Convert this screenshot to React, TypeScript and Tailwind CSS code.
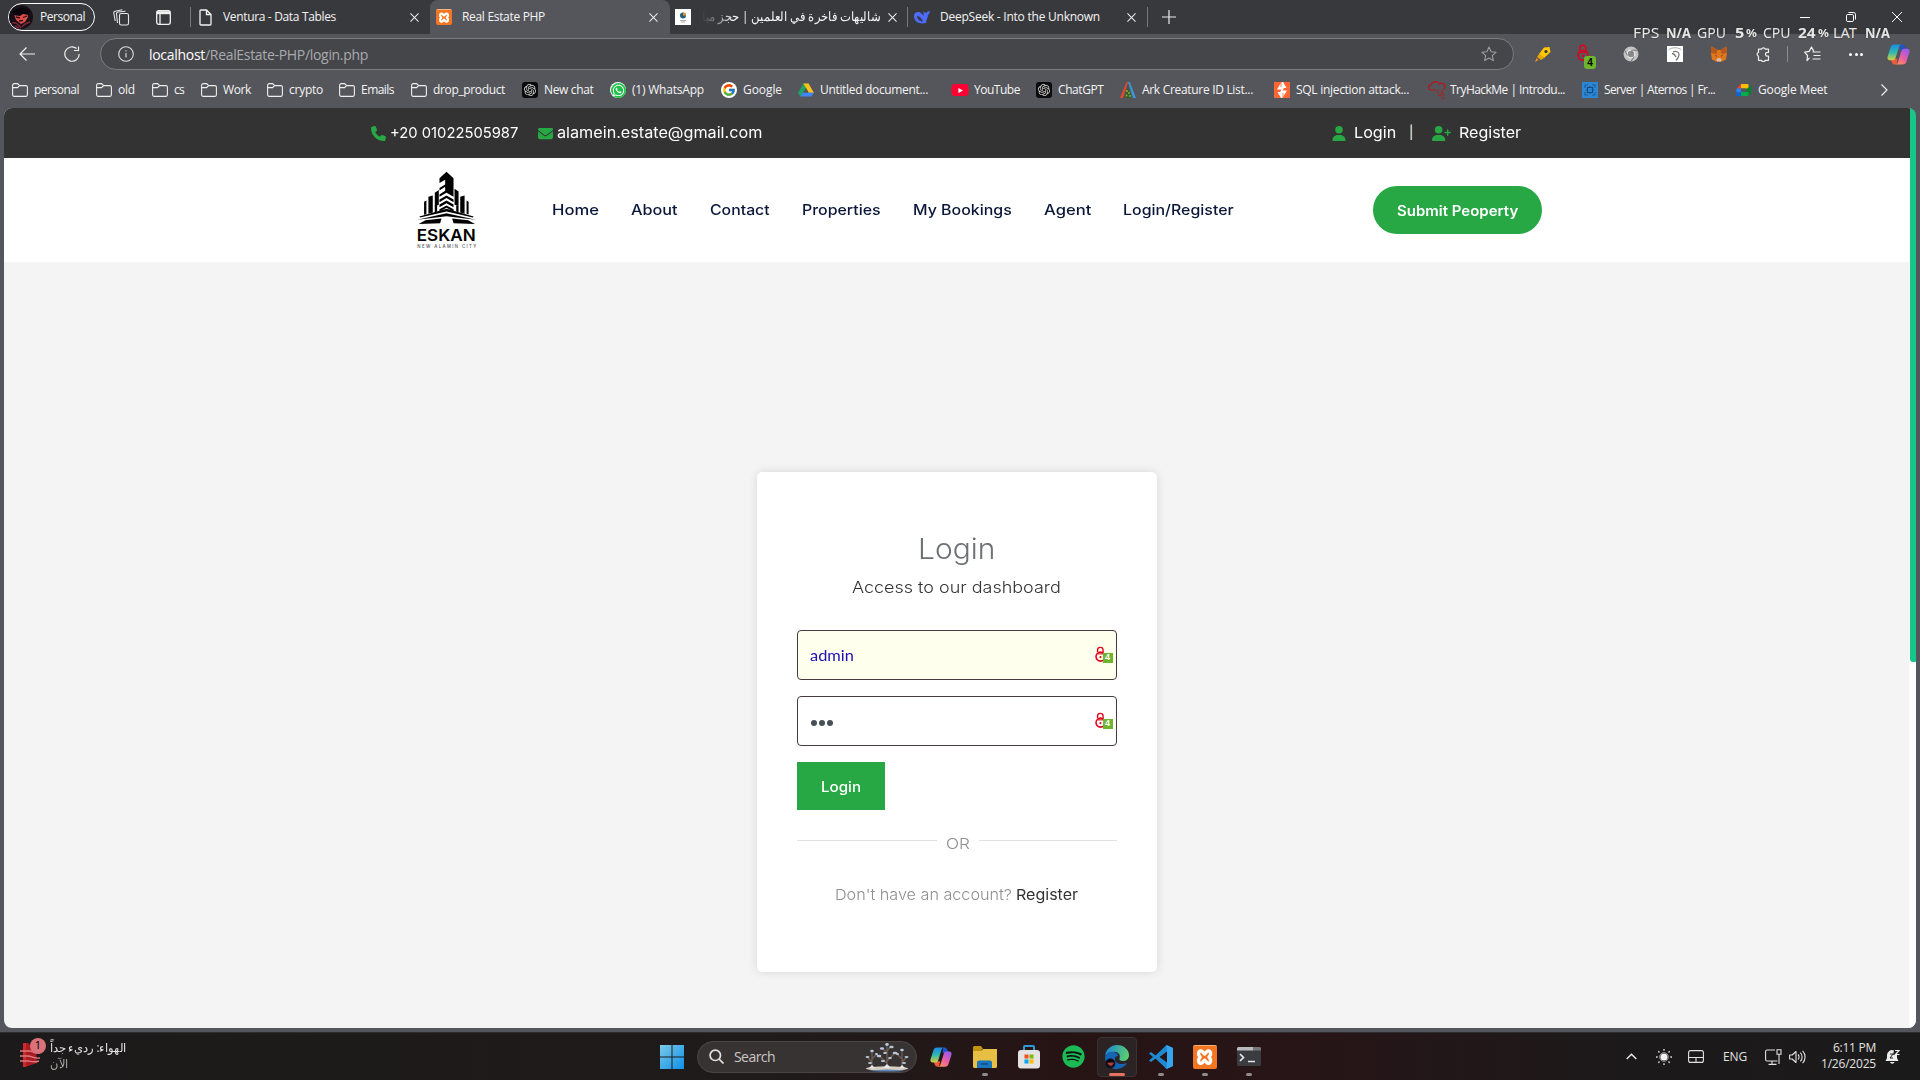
import { useLayoutEffect, useRef, type ReactNode } from "react";
import { FcGoogle } from "react-icons/fc";
import { FaYoutube, FaSpotify, FaWhatsapp } from "react-icons/fa";
import { FaPhone, FaEnvelope, FaUser, FaUserPlus } from "react-icons/fa6";
import { SiOpenai } from "react-icons/si";

/** Text spread over a fixed measure: the letter spacing is worked out once the text is laid out. */
function T({ w, className = "", children }: { w: number; className?: string; children: string }) {
  const ref = useRef<HTMLSpanElement>(null);
  useLayoutEffect(() => {
    const el = ref.current;
    if (!el) return;
    el.style.letterSpacing = "0px";
    const natural = el.getBoundingClientRect().width;
    el.style.letterSpacing = `${(w - natural) / children.length}px`;
  }, [w, children]);
  return (
    <span ref={ref} className={`inline-block shrink-0 whitespace-pre ${className}`}>
      {children}
    </span>
  );
}

/** Text whose glyphs are widened or narrowed to fill a fixed measure. */
function Wide({ w, className = "", children }: { w: number; className?: string; children: string }) {
  const ref = useRef<HTMLSpanElement>(null);
  useLayoutEffect(() => {
    const el = ref.current;
    if (!el) return;
    el.style.transform = `scaleX(${w / el.offsetWidth})`;
  }, [w, children]);
  return (
    <span className={`flex shrink-0 justify-start ${className}`} style={{ width: w }} dir="ltr">
      <span ref={ref} className="inline-block shrink-0 origin-left whitespace-pre">
        {children}
      </span>
    </span>
  );
}

function Slot({ className, children }: { className: string; children?: ReactNode }) {
  return <div className={`flex shrink-0 items-center justify-center ${className}`}>{children}</div>;
}

/* ---------- icons ---------- */

const Close = () => (
  <svg viewBox="0 0 10 10" className="size-[9px] shrink-0" stroke="#e8e8e8" strokeWidth="1.2">
    <path d="M.5.5l9 9M9.5.5l-9 9" />
  </svg>
);

const Folder = () => (
  <svg viewBox="0 0 16 16" className="size-4 shrink-0" fill="none" stroke="#eee" strokeWidth="1.1">
    <path d="M.6 3.2a1.6 1.6 0 0 1 1.6-1.6h3.4l2 2h6.2a1.6 1.6 0 0 1 1.6 1.6v7.6a1.6 1.6 0 0 1-1.6 1.6H2.2a1.6 1.6 0 0 1-1.6-1.6zM.6 5.6h5l2-2" />
  </svg>
);

const Gpt = () => (
  <span className="flex size-4 shrink-0 items-center justify-center rounded-[3px] bg-[#0b0b0b]">
    <SiOpenai className="size-3 text-[#d8d8d8]" />
  </span>
);

const WhatsApp = () => (
  <span className="flex size-4 shrink-0 items-center justify-center rounded-full bg-white">
    <span className="flex size-[15px] items-center justify-center rounded-full bg-[#1fc24b]">
      <FaWhatsapp className="size-[13px] text-white" />
    </span>
  </span>
);

const GoogleG = () => (
  <span className="flex size-4 shrink-0 items-center justify-center rounded-full bg-white">
    <FcGoogle className="size-[14px]" />
  </span>
);

const Drive = () => (
  <svg viewBox="0 0 16 16" className="size-4 shrink-0">
    <path d="M5.4 1.5h5.2L5 11.2l-2.6 3.3L0 10.9z" fill="#1fa463" />
    <path d="M5.4 1.5h5.2l5.4 9.4h-5.3z" fill="#fbc116" />
    <path d="M5 10.6h11l-2.6 4H2.4z" fill="#4385f5" />
    <path d="M8 6.1l2.7 4.5H5.4z" fill="#55565b" />
  </svg>
);

const YouTube = () => (
  <span className="relative flex size-4 shrink-0 items-center justify-center">
    <FaYoutube className="size-[18px] shrink-0 text-[#ff0033]" />
    <span className="absolute -z-0 flex h-[11px] w-4 items-center justify-center rounded-[3px] bg-[#ff0033]">
      <svg viewBox="0 0 6 6" className="size-[5px]" fill="#fff"><path d="M.5 0L6 3 .5 6z" /></svg>
    </span>
  </span>
);

const Ark = () => (
  <svg viewBox="0 0 16 16" className="size-4 shrink-0">
    <path d="M6.500 0L8 0 3 16H0z" fill="#e8472d" />
    <path d="M8 0h1.800L16 16h-3z" fill="#3a96d8" />
    <path d="M8 4l4 12H4z" fill="#3d5b2c" />
    <circle cx="7" cy="9" r=".9" fill="#7bbf3a" /><circle cx="9" cy="11" r=".9" fill="#7bbf3a" />
    <circle cx="6.500" cy="13.500" r=".9" fill="#7bbf3a" /><circle cx="10" cy="14" r=".9" fill="#7bbf3a" />
  </svg>
);

const Bolt = () => (
  <svg viewBox="0 0 16 16" className="size-4 shrink-0">
    <path d="M0 0h16v16H0z" fill="#ff6633" />
    <path d="M7.500 0L3 7.500h4.500L6 10H3.500L7 16h1.500L13 8.500H8.500L10 6h2.500L9 0z" fill="#fff" />
    <path d="M7 0v5M9 11v5" stroke="#ff6633" strokeWidth=".8" />
  </svg>
);

const TryHackMe = () => (
  <svg viewBox="0 0 18 18" className="size-[18px] shrink-0" fill="none" stroke="#b3171f" strokeWidth="1.200">
    <path d="M8 9H3.500a2.700 2.700 0 0 1-.2-5.400A4.500 4.500 0 0 1 11.500 3a3.300 3.300 0 0 1 4.200 5.200" />
    <path d="M9 9.500h2M12.500 9.500h3M8.500 12h1.500M11.500 12h4M10 14.500h4M13 17h3.500M15.500 12v3" stroke="#8f3036" strokeWidth="1.600" />
  </svg>
);

const Aternos = () => (
  <svg viewBox="0 0 16 16" className="size-4 shrink-0">
    <path d="M0 0h16v16H0z" fill="#2b87d3" />
    <path d="M3 6V3h3M10 3h3v3M13 10v3h-3M6 13H3v-3" fill="none" stroke="#1d5f9b" strokeWidth="1.200" />
    <path d="M5.500 5.500h5v5h-5zM4 8h1.500M10.500 8H12M8 4v1.500M8 10.500V12" fill="none" stroke="#174a7c" strokeWidth="1.100" />
  </svg>
);

const Meet = () => (
  <svg viewBox="0 0 16 16" className="size-4 shrink-0">
    <path d="M5 2h6.500a1 1 0 0 1 1 1v3.500H5z" fill="#fbbc04" />
    <path d="M.5 6.500L5 2v4.500z" fill="#ea4335" />
    <path d="M.5 6.500H5v4H.5z" fill="#2684fc" />
    <path d="M.5 10.500H5V14H1.500a1 1 0 0 1-1-1z" fill="#0066da" />
    <path d="M5 10h7.500v3a1 1 0 0 1-1 1H5z" fill="#00ac47" />
    <path d="M9.500 8l5.800-4.800v9.600z" fill="#00832d" />
    <path d="M5 6.500h4.500v3.500H5z" fill="#55565b" />
  </svg>
);

const Xampp = ({ className = "size-4" }: { className?: string }) => (
  <span className={`flex shrink-0 items-center justify-center rounded-[2px] border-t border-[#f9b27a] bg-[#f37623] ${className}`}>
    <svg viewBox="0 0 16 16" className="size-[88%]" fill="none" stroke="#fff" strokeWidth="2.700" strokeLinecap="round" strokeLinejoin="round">
      <path d="M3.300 6.200V4.600a1.700 1.700 0 0 1 3.200-.6L8 5.500 9.500 4a1.700 1.700 0 0 1 3.200.6v1.600L11.500 8l1.200 1.800v1.600a1.700 1.700 0 0 1-3.200.6L8 10.500 6.500 12a1.700 1.700 0 0 1-3.200-.6V9.800L4.500 8z" />
    </svg>
  </span>
);

const Copilot = ({ className }: { className: string }) => (
  <svg viewBox="0 0 24 24" className={className}>
    <defs>
      <linearGradient id="cpl" x1="0" y1="0" x2="0" y2="1">
        <stop offset="0" stopColor="#1b8be8" /><stop offset=".5" stopColor="#2fb8b0" /><stop offset="1" stopColor="#d8cf3c" />
      </linearGradient>
      <linearGradient id="cpr" x1=".6" y1="0" x2="0" y2="1">
        <stop offset="0" stopColor="#a45ae8" /><stop offset=".5" stopColor="#ec5f9c" /><stop offset="1" stopColor="#ff9a50" />
      </linearGradient>
    </defs>
    <path d="M14 1.500h2a3 3 0 0 1 2.800 2.200L20.500 8H14z" fill="#1f54c8" />
    <path d="M10 22.500H8a3 3 0 0 1-2.900-2.200L4 16.500h7z" fill="#ef5b3c" />
    <path d="M7.500 1.500H15c-1.400 0-2 1-2.500 2.600L9 15.500c-.4 1.500-1.200 2.500-3 2.500H3c-2 0-3-1.600-2.400-3.600l3.200-10C4.500 2.500 5.500 1.500 7.500 1.500z" fill="url(#cpl)" />
    <path d="M16.500 22.500H9c1.400 0 2-1 2.500-2.600L15 8.500c.4-1.500 1.200-2.500 3-2.500h3c2 0 3 1.600 2.400 3.600l-3.200 10c-.7 1.900-1.700 2.900-3.700 2.900z" fill="url(#cpr)" />
  </svg>
);

const Avatar = ({ className }: { className: string }) => (
  <svg viewBox="0 0 24 24" className={className}>
    <circle cx="12" cy="12" r="12" fill="#171019" />
    <path d="M5 9l13-2 1 5-3 5-4 2-5-4z" fill="#d94f45" />
    <path d="M3 7c5-5 13-5 18-1l-1 4-6-1-3 2-7-1z" fill="#08060a" />
    <path d="M7 12l4 1M14 12.500l4-1.500M10 16l4-.5" stroke="#3b1015" strokeWidth="1.300" />
    <path d="M3 18c4-1 7 2 9 5M13 22c2-3 5-4 8-5M6 21l4 2" stroke="#7d2638" strokeWidth="1.500" fill="none" />
  </svg>
);

const Lock = ({ className }: { className: string }) => (
  <svg viewBox="0 0 12 18" className={className} fill="none" stroke="#e3001b">
    <path d="M2.800 6.500V4.200a3 3 0 0 1 6 0V7" strokeWidth="1.500" />
    <circle cx="6" cy="11.300" r="4.900" strokeWidth="1.700" />
    <path d="M2.500 8.300h7" strokeWidth="1.200" />
    <circle cx="6" cy="11.800" r="1.200" fill="#e3001b" stroke="none" />
  </svg>
);

const EskanLogo = () => (
  <svg viewBox="230 198 182 236" className="h-[79px] w-[61px] shrink-0">
    <path d="M321 200l21 20v55l-21-12-21 12v-7l17-11v-12l-17 11v-7l17-11v-14l-17 10v-14z" fill="#000" />
    <path d="M286 263l12-8v44l-12 4zM345 251l12 8v44l-12-4z" fill="#000" />
    <path d="M300 283l21-12 21 12v8l-21-12-21 12zM300 298l21-12 21 12v8l-21-12-21 12zM300 312l21-11 21 11v7l-21-11-21 11z" fill="#000" />
    <path d="M286 301l7-2v20l-7 2zM350 301l7 2v18l-7-2zM267 275l13-4v51l-13 4zM254 290l7-4v41l-7 2zM362 275l13-4v55l-13-4zM381 286l6 4v38l-6-2z" fill="#000" />
    <path d="M240 334l81-23 81 23-2 3-79-18-79 18zM234 344l87-20 87 20-87-11z" fill="#000" />
    <path d="M238 356l20-11 48-5-4 14zM406 356l-20-11-48-5 4 14z" fill="#000" />
    <text x="232" y="407" textLength="176" lengthAdjust="spacingAndGlyphs" className="font-['Inter'] text-[47px] font-semibold">ESKAN</text>
    <text x="234" y="429" textLength="176" className="font-['Inter'] text-[13px]" fill="#555">NEW ALAMIN CITY</text>
  </svg>
);

/* ---------- browser chrome ---------- */

const bookmarks: { slot: string; icon: ReactNode; label: string; w: number }[] = [
  { slot: "w-[84px]", icon: <Folder />, label: "personal", w: 45 },
  { slot: "w-[56px]", icon: <Folder />, label: "old", w: 17 },
  { slot: "w-[49px]", icon: <Folder />, label: "cs", w: 10 },
  { slot: "w-[66px]", icon: <Folder />, label: "Work", w: 28 },
  { slot: "w-[72px]", icon: <Folder />, label: "crypto", w: 34 },
  { slot: "w-[72px]", icon: <Folder />, label: "Emails", w: 33 },
  { slot: "w-[111px]", icon: <Folder />, label: "drop_product", w: 72 },
  { slot: "w-[88px]", icon: <Gpt />, label: "New chat", w: 49.5 },
  { slot: "w-[111px]", icon: <WhatsApp />, label: "(1) WhatsApp", w: 72 },
  { slot: "w-[77px]", icon: <GoogleG />, label: "Google", w: 39 },
  { slot: "w-[154px]", icon: <Drive />, label: "Untitled document...", w: 108 },
  { slot: "w-[84px]", icon: <YouTube />, label: "YouTube", w: 46 },
  { slot: "w-[84px]", icon: <Gpt />, label: "ChatGPT", w: 45.5 },
  { slot: "w-[154px]", icon: <Ark />, label: "Ark Creature ID List...", w: 111 },
  { slot: "w-[154px]", icon: <Bolt />, label: "SQL injection attack...", w: 113 },
  { slot: "w-[154px]", icon: <TryHackMe />, label: "TryHackMe | Introdu...", w: 115 },
  { slot: "w-[154px]", icon: <Aternos />, label: "Server | Aternos | Fr...", w: 111 },
  { slot: "w-[130px]", icon: <Meet />, label: "Google Meet", w: 69.5 },
];

function TabBar() {
  return (
    <div className="flex h-[34px] items-center bg-[#38393c] pl-2">
      <div className="flex h-7 w-[87px] shrink-0 items-center rounded-full border border-white">
        <Avatar className="size-6" />
        <T w={45} className="ml-[7px]">Personal</T>
      </div>
      <Slot className="ml-[16px] w-5">
        <svg viewBox="0 0 17 17" className="size-[17px]" fill="none" stroke="#e6e6e6" strokeWidth="1.100" strokeLinejoin="round">
          <rect x="6.500" y="4.500" width="9" height="11.500" rx="1.800" />
          <path d="M4.500 14l-1-9.200A1.500 1.500 0 0 1 5 3l7.500-.8M2.200 12L.8 4A1.500 1.500 0 0 1 2 2.200L9.500.8" />
        </svg>
      </Slot>
      <Slot className="ml-[22px] w-5">
        <svg viewBox="0 0 15 15" className="size-[15px]" fill="none" stroke="#f2f2f2" strokeWidth="1.300">
          <rect x=".7" y=".7" width="13.600" height="13.600" rx="2" />
          <path d="M1 2.700h13" strokeWidth="3" /><path d="M4 4v10" />
        </svg>
      </Slot>
      <div className="ml-[17px] h-5 w-px bg-[#77787b]" />
      <div className="flex h-full w-[239px] shrink-0 items-center pl-2">
        <svg viewBox="0 0 13 17" className="h-[17px] w-[13px] shrink-0" fill="none" stroke="#f2f2f2" strokeWidth="1.300">
          <path d="M1 2a1 1 0 0 1 1-1h5.500L12 5.500V15a1 1 0 0 1-1 1H2a1 1 0 0 1-1-1zM7.500 1v4.500H12" />
        </svg>
        <T w={113} className="mr-[74px] ml-[11px]">Ventura - Data Tables</T>
        <Close />
      </div>
      <div className="flex h-full w-[240px] shrink-0 items-center rounded-t-lg bg-[#55565b] pl-[6px]">
        <Xampp />
        <T w={83} className="mr-[104px] ml-[10px]">Real Estate PHP</T>
        <Close />
      </div>
      <div className="flex h-full w-[237px] shrink-0 items-center pl-[5px]">
        <Slot className="size-4 bg-white">
          <svg viewBox="0 0 10 12" className="h-3 w-2.5">
            <circle cx="5" cy="4.500" r="3" fill="#23607b" /><path d="M5 1.500A3 3 0 0 1 8 4.500H5z" fill="#e39a2d" />
            <path d="M2 9.500h6M3 11h4" stroke="#999" strokeWidth=".8" />
          </svg>
        </Slot>
        <div className="mr-[8px] ml-[11px] w-[178px] shrink-0 [mask-image:linear-gradient(to_right,transparent,black_18%)]">
          <Wide w={178} className="text-[13px]">شاليهات فاخرة في العلمين | حجز مبا</Wide>
        </div>
        <Close />
      </div>
      <div className="h-5 w-px bg-[#77787b]" />
      <div className="flex h-full w-[239px] shrink-0 items-center pl-[6px]">
        <svg viewBox="0 0 16 14" className="h-3.5 w-4 shrink-0" fill="#4d6bfe">
          <path d="M0 6C0 3 2.500 1.500 5 2c2 .4 3 2 4.500 4C10 4 9 3 9.500 1.500c1 1.500 2 1.500 3 1C14 2 14 1 15.800 1c.2 2-.8 3.300-2 4C14 9 11.500 10 12.500 12.500 8 14.500 0 13.500 0 6zm3 0c0 3 3 5.500 6 5.500C7.500 9 6 6 3 6z" />
        </svg>
        <T w={160} className="mr-[27px] ml-[10px]">DeepSeek - Into the Unknown</T>
        <Close />
      </div>
      <div className="h-5 w-px bg-[#77787b]" />
      <svg viewBox="0 0 14 14" className="ml-[14px] size-[14px]" stroke="#eee" strokeWidth="1.200"><path d="M7 0v14M0 7h14" /></svg>
      <div className="ml-auto flex items-center pr-[18px]">
        <Slot className="w-[46px]"><div className="h-px w-[10px] bg-white" /></Slot>
        <Slot className="w-[46px]">
          <svg viewBox="0 0 10 10" className="size-[10px]" fill="none" stroke="#fff">
            <rect x=".5" y="2.500" width="7" height="7" rx="1.300" /><path d="M2.500.5h5a2 2 0 0 1 2 2v5" />
          </svg>
        </Slot>
        <Slot className="ml-[18px] w-[10px]">
          <svg viewBox="0 0 10 10" className="size-[10px]" stroke="#fff"><path d="M0 0l10 10M10 0L0 10" /></svg>
        </Slot>
      </div>
    </div>
  );
}

function Toolbar() {
  return (
    <div className="flex h-10 items-center bg-[#55565b] pl-[17px]">
      <Slot className="w-5">
        <svg viewBox="0 0 16 14" className="h-3.5 w-4" fill="none" stroke="#eee" strokeWidth="1.200"><path d="M16 7H1M7.500.5L1 7l6.500 6.500" /></svg>
      </Slot>
      <Slot className="ml-[25px] w-5">
        <svg viewBox="0 0 16 16" className="size-4" fill="none" stroke="#eee" strokeWidth="1.200"><path d="M15.200 8A7.200 7.200 0 1 1 12.600 2.500M14.500.5V4.500H10" /></svg>
      </Slot>
      <div className="ml-[18px] flex h-8 w-[1414px] shrink-0 items-center rounded-full border border-[#7b7c80] bg-[#45464a] pl-[17px]">
        <svg viewBox="0 0 16 16" className="size-4" fill="none" stroke="#ddd" strokeWidth="1.100"><circle cx="8" cy="8" r="7.300" /><path d="M8 7v4.500M8 4.300v1.300" /></svg>
        <T w={56} className="ml-[15px] text-[14px] text-white">localhost</T>
        <T w={163} className="text-[14px] text-[#a9aaad]">/RealEstate-PHP/login.php</T>
        <svg viewBox="0 0 16 16" className="mr-4 ml-auto size-4" fill="none" stroke="#9c9da0" strokeWidth="1.100" strokeLinejoin="round">
          <path d="M8 1l2.100 4.700 5 .5-3.800 3.400 1.100 5L8 12l-4.400 2.600 1.100-5L.9 6.200l5-.5z" />
        </svg>
      </div>
      <Slot className="ml-[7px] w-11">
        <svg viewBox="0 0 16 16" className="size-4">
          <path d="M9 1.500L14.500 1 15.500 6 9 12 4 8z" fill="#ffc800" /><path d="M4 8l5 4-3 2-4-3z" fill="#e8a800" /><path d="M0 16l1.500-4 2 2z" fill="#ff8a1e" /><circle cx="11" cy="5.500" r="1.600" fill="#333" />
        </svg>
      </Slot>
      <Slot className="w-11">
        <div className="relative mr-2 mb-[2px] h-[18px] w-3">
          <Lock className="h-[18px] w-3" />
          <span className="absolute top-[12px] left-[7px] flex h-[13px] w-3 items-center justify-center rounded-[3px] bg-[#6cb52d] font-['Liberation_Sans'] text-[10px] font-bold text-black">4</span>
        </div>
      </Slot>
      <Slot className="w-11">
        <svg viewBox="0 0 16 16" className="size-4">
          <circle cx="8" cy="8" r="7.500" fill="#c3c3c3" /><circle cx="8" cy="8" r="3.800" fill="#8a8a8a" stroke="#eee" strokeWidth="1.200" />
          <path d="M8 4.200h7M4.500 9.500L1.500 4M11 10.500L8 15.500" stroke="#777" />
        </svg>
      </Slot>
      <Slot className="w-11">
        <svg viewBox="0 0 16 16" className="size-4">
          <path d="M0 0h16v16H0z" fill="#fff" /><path d="M1.500 4C4 1 12 1 14.500 4" fill="none" stroke="#aaa" />
          <path d="M6 6c3-1.500 6 0 6 2.500s-1 4-3 6M5 7.500c2 0 3 1.500 4 3.500" fill="none" stroke="#777" strokeWidth="1.300" />
        </svg>
      </Slot>
      <Slot className="w-11">
        <svg viewBox="0 0 16 16" className="size-4">
          <path d="M.5.5l6 3.500h3l6-3.500.5 7-1 6-4 2H5l-4-2-1-6z" fill="#e2761b" />
          <path d="M.5.5l6 3.500L5.500 8 0 7z" fill="#b5581c" /><path d="M15.500.5l-6 3.500 1 4L16 7z" fill="#b5581c" />
          <path d="M5.500 13l2.500-1 2.500 1-.5 2.500H6z" fill="#d7c1b3" /><path d="M4 9l2 .8-.5 1zM12 9l-2 .8.5 1z" fill="#233447" />
        </svg>
      </Slot>
      <Slot className="w-11">
        <svg viewBox="0 0 16 16" className="size-4" fill="none" stroke="#eee" strokeWidth="1.200" strokeLinejoin="round">
          <path d="M3.500 3.200h3a2 2 0 0 1 3.800 0h3.200v3.300h-.8a1.800 1.800 0 1 0 0 3.500h.8v4.300h-3.200a2 2 0 0 1-3.800 0h-3V10.200a2 2 0 0 1 0-3.800z" />
        </svg>
      </Slot>
      <div className="mx-[2px] h-4 w-px bg-[#8c8d90]" />
      <Slot className="w-11">
        <svg viewBox="0 0 17 16" className="h-4 w-[17px]" fill="none" stroke="#eee" strokeWidth="1.200" strokeLinejoin="round">
          <path d="M5.500 11.800L3 14.500l.5-5L.6 6.200l4.600-.8L7.500 1l2.300 4.400M8.500 6h8M9.500 9.500h7M8.500 13h8" />
        </svg>
      </Slot>
      <Slot className="w-11 gap-[2.500px]">
        <i className="size-[3px] rounded-full bg-white" /><i className="size-[3px] rounded-full bg-white" /><i className="size-[3px] rounded-full bg-white" />
      </Slot>
      <Slot className="w-[40px]"><Copilot className="size-[23px]" /></Slot>
    </div>
  );
}

function Bookmarks() {
  return (
    <div className="flex h-8 items-center bg-[#55565b] pl-3">
      {bookmarks.map((b) => (
        <div key={b.label} className={`flex shrink-0 items-center ${b.slot}`}>
          <span className="flex w-[22px] shrink-0 items-center">{b.icon}</span>
          <T w={b.w}>{b.label}</T>
        </div>
      ))}
      <svg viewBox="0 0 7 12" className="ml-[15px] h-3 w-[7px]" fill="none" stroke="#eee" strokeWidth="1.200"><path d="M.5.5L6 6 .5 11.500" /></svg>
    </div>
  );
}

function Overlay() {
  const v = "font-bold";
  return (
    <div className="absolute top-[24px] left-[1633px] flex h-[18px] items-center font-['Noto_Sans'] text-[14.500px] text-[#e6e6e6] [text-shadow:0_0_2px_#333]">
      <Wide w={26}>FPS</Wide><Wide w={25} className={`ml-[7px] ${v}`}>N/A</Wide>
      <Wide w={29} className="ml-[6px]">GPU</Wide><Wide w={9} className={`ml-[9px] ${v}`}>5</Wide><Wide w={11} className={`ml-[2px] text-[11px] ${v}`}>%</Wide>
      <Wide w={28} className="ml-[6px]">CPU</Wide><Wide w={18} className={`ml-[7px] ${v}`}>24</Wide><Wide w={11} className={`ml-[2px] text-[11px] ${v}`}>%</Wide>
      <Wide w={24} className="ml-[4px]">LAT</Wide><Wide w={25} className={`ml-[8px] ${v}`}>N/A</Wide>
    </div>
  );
}

/* ---------- web page ---------- */

const nav = [
  { label: "Home", w: 47 },
  { label: "About", w: 47 },
  { label: "Contact", w: 60 },
  { label: "Properties", w: 79 },
  { label: "My Bookings", w: 99 },
  { label: "Agent", w: 47 },
  { label: "Login/Register", w: 111 },
];

function Field({ tint, children }: { tint: string; children: ReactNode }) {
  return (
    <div className={`flex h-[50px] items-center rounded-[4px] border border-[#463a3e] pr-[3px] pl-3 ${tint}`}>
      {children}
      <div className="relative ml-auto h-[18px] w-[18px]">
        <Lock className="h-[17px] w-[11px]" />
        <span className="absolute top-[7px] left-2 flex size-[10px] items-center justify-center bg-[#6cb52d] font-['Liberation_Sans'] text-[9px] font-bold text-white">4</span>
      </div>
    </div>
  );
}

function Page() {
  return (
    <div className="mx-1 flex h-[920px] flex-col overflow-hidden rounded-lg bg-[#f4f4f4] font-['Inter']">
      <div className="relative flex h-[50px] shrink-0 items-center bg-[#333] pl-[367px] text-[15px] text-white">
        <FaPhone className="size-[15px] text-[#28a745]" />
        <Wide w={128} className="ml-[4px]">+20 01022505987</Wide>
        <FaEnvelope className="ml-[20px] size-[15px] text-[#28a745]" />
        <Wide w={205} className="ml-[4px]">alamein.estate@gmail.com</Wide>
        <FaUser className="ml-[570px] h-[15px] w-[14px] text-[#28a745]" />
        <Wide w={42} className="ml-[8px]">Login</Wide>
        <span className="ml-[13px] w-[4px] text-[13px]">|</span>
        <FaUserPlus className="ml-[19px] size-[19px] text-[#28a745]" />
        <Wide w={62} className="ml-[8px]">Register</Wide>
        <div className="absolute top-0 right-[-1px] z-10 h-[554px] w-[7px] rounded-b-[3px] bg-[#17c788]" />
      </div>
      <div className="flex h-[104px] shrink-0 items-center bg-white pl-[412px] text-[14.500px] font-medium text-[#0b1738]">
        <EskanLogo />
        <div className="ml-[75px] flex gap-8">
          {nav.map((n) => <Wide key={n.label} w={n.w}>{n.label}</Wide>)}
        </div>
        <div className="ml-[139px] flex h-12 w-[169px] items-center justify-center rounded-full bg-[#28a745] text-white">
          <Wide w={121} className="text-[14px] font-semibold">Submit Peoperty</Wide>
        </div>
      </div>
      <div className="flex flex-1">
        <div className="flex flex-1 justify-center pt-[210px]">
          <div className="flex h-[500px] w-[400px] flex-col rounded-[5px] bg-white px-10 pt-[56px] shadow-[0_0_10px_rgba(0,0,0,0.12)]">
            <div className="flex h-[42px] items-center justify-center font-['Inter'] text-[28px] font-light text-[#6d7075]"><Wide w={77}>Login</Wide></div>
            <div className="flex h-[34px] items-center justify-center text-[16.500px] font-light text-[#333]"><Wide w={209}>Access to our dashboard</Wide></div>
            <div className="mt-[26px] flex flex-col gap-4">
              <Field tint="bg-[#ffffee]"><Wide w={44} className="mb-[1px] font-['Lato'] text-[16px] text-[#1c10b4]">admin</Wide></Field>
              <Field tint="bg-white">
                <span className="mt-[3px] ml-[1px] flex gap-[2px]">
                  <i className="size-[6px] rounded-full bg-[#495057]" /><i className="size-[6px] rounded-full bg-[#495057]" /><i className="size-[6px] rounded-full bg-[#495057]" />
                </span>
              </Field>
              <div className="flex h-12 w-[88px] items-center justify-center bg-[#28a745] text-[14px] font-medium text-white"><Wide w={40}>Login</Wide></div>
            </div>
            <div className="mt-[21px] flex h-6 justify-between text-[15px] font-light text-[#8f8f8f]">
              <div className="mt-[9px] h-px w-[140px] bg-[#e2e2e2]" />
              <Wide w={24} className="mt-[2px]">OR</Wide>
              <div className="mt-[9px] h-px w-[138px] bg-[#e2e2e2]" />
            </div>
            <div className="mt-[28px] flex h-6 items-center justify-center text-[15px] font-light text-[#8f8f8f]">
              <Wide w={181}>{"Don't have an account? "}</Wide>
              <Wide w={62} className="font-normal text-[#333]">Register</Wide>
            </div>
          </div>
        </div>
        <div className="w-[7px] bg-white" />
      </div>
    </div>
  );
}

/* ---------- taskbar ---------- */

const SearchScene = () => (
  <svg viewBox="0 0 44 30" className="h-[30px] w-11">
    <ellipse cx="22" cy="26.500" rx="21" ry="2.200" fill="#d8cfc0" />
    <ellipse cx="22" cy="28.600" rx="17" ry="1" fill="#5f86b4" />
    <g stroke="#6e5d52" strokeWidth="1.300" fill="none">
      <path d="M22 26V2M22 21l-8-7M22 19l8-8M22 11l-5-5M22 9l4-5M7 26V9M7 20l-5-5M7 17l5-5M37 26V8M37 20l5-5M37 17l-5-5" />
    </g>
    <g fill="#b9c7d8">
      <ellipse cx="22" cy="2.500" rx="1.800" ry="1.400" /><ellipse cx="17" cy="6.500" rx="2.200" ry="1.200" /><ellipse cx="26.500" cy="5" rx="2.200" ry="1.200" />
      <ellipse cx="14" cy="14" rx="2.400" ry="1.200" /><ellipse cx="30" cy="11" rx="2.400" ry="1.200" /><ellipse cx="20" cy="11" rx="2" ry="1" />
      <ellipse cx="25" cy="16" rx="2" ry="1" /><ellipse cx="18" cy="19" rx="2.200" ry="1" /><ellipse cx="7" cy="9" rx="1.800" ry="1.200" />
      <ellipse cx="2.500" cy="15" rx="2" ry="1.100" /><ellipse cx="11.500" cy="12" rx="1.600" ry="1" /><ellipse cx="5" cy="21" rx="2" ry="1" />
      <ellipse cx="37" cy="8" rx="1.800" ry="1.200" /><ellipse cx="41.500" cy="15" rx="2" ry="1.100" /><ellipse cx="32.500" cy="12" rx="1.600" ry="1" /><ellipse cx="39" cy="21" rx="2" ry="1" />
    </g>
    <path d="M4 26l3-3 3 3zM18 26l4-4 4 4zM34 26l3-3 3 3z" fill="#e4e8ee" />
  </svg>
);

function TaskApp({ children, mark }: { children: ReactNode; mark?: "dot" | "active" }) {
  return (
    <div className={`relative flex h-10 w-10 shrink-0 items-center justify-center rounded-[4px] ${mark === "active" ? "border border-[#3a3131] bg-[#2c2324]" : ""}`}>
      {children}
      {mark === "dot" && <span className="absolute bottom-[1px] h-[3px] w-1.5 rounded-full bg-[#8f8b8b]" />}
      {mark === "active" && <span className="absolute bottom-0 h-[3px] w-4 rounded-full bg-[#e5735f]" />}
    </div>
  );
}

function Taskbar() {
  return (
    <div className="flex h-12 items-center border-t border-[#2f2d2f] bg-[linear-gradient(90deg,#1c1a1a_0%,#1f1b1b_40%,#261415_55%,#271517_68%,#1c191a_84%,#1b1a1a_100%)] text-[#e2e2e2]">
      <div className="flex w-[660px] shrink-0 items-start pl-[20px]">
        <div className="relative h-8 w-[30px]">
          <svg viewBox="0 0 22 26" className="mt-[1px] h-[26px] w-[22px]">
            <path d="M3 1h5l8 8 1 12-12 4H3z" fill="#a81c22" /><path d="M3 1h3v24H3z" fill="#d2272c" />
            <path d="M0 9h10c3 0 4 3 10 2M0 14h8c4 0 5 3 12 2M0 19h8c3 0 5 2 11 0" stroke="#dd7a80" strokeWidth="1.400" fill="none" />
          </svg>
          <span className="absolute -top-[3px] left-[10px] flex size-4 items-center justify-center rounded-full bg-[#d9727a] font-['Open_Sans'] text-[11px] text-black">1</span>
        </div>
        <div className="-mt-[1px] flex flex-col text-[12px] leading-4">
          <Wide w={76}>الهواء: رديء جداً</Wide>
          <Wide w={18} className="text-[#a8a5a5]">الآن</Wide>
        </div>
      </div>
      <svg viewBox="0 0 24 24" className="size-6 shrink-0">
        <defs><linearGradient id="win" x1="0" y1="0" x2="1" y2="1"><stop offset="0" stopColor="#7cc9e8" /><stop offset="1" stopColor="#0e8fe8" /></linearGradient></defs>
        <path d="M0 0h11.500v11.500H0zM12.500 0H24v11.500H12.500zM0 12.500h11.500V24H0zM12.500 12.500H24V24H12.500z" fill="url(#win)" />
      </svg>
      <div className="ml-[13px] flex h-8 w-[220px] shrink-0 items-center rounded-full border border-[#4b4646] bg-[#383333] pr-[7px] pl-[11px]">
        <svg viewBox="0 0 15 15" className="size-[15px]" fill="none" stroke="#e0e0e0" strokeWidth="1.700"><circle cx="6.300" cy="6.300" r="5.200" /><path d="M10 10l4.500 4.500" /></svg>
        <T w={41} className="ml-[10px] text-[14px] text-[#c9c7c7]">Search</T>
        <span className="ml-auto"><SearchScene /></span>
      </div>
      <div className="ml-[4px] flex gap-1">
        <TaskApp><Copilot className="size-[22px]" /></TaskApp>
        <TaskApp mark="dot">
          <svg viewBox="0 0 24 22" className="h-[22px] w-6">
            <path d="M0 1.500A1.500 1.500 0 0 1 1.500 0H8l2 3h-1l-1 3H0z" fill="#c4920e" /><path d="M0 5l8 0 2-2h14v17.500a1.500 1.500 0 0 1-1.500 1.500h-21A1.500 1.500 0 0 1 0 20.500z" fill="#e8bf45" />
            <path d="M4 22v-5.500a2 2 0 0 1 2-2h11a2 2 0 0 1 2 2V22z" fill="#1b75bb" /><path d="M8 18h7" stroke="#0c4f86" strokeWidth="1.500" />
          </svg>
        </TaskApp>
        <TaskApp>
          <svg viewBox="0 0 22 24" className="h-6 w-[22px]">
            <path d="M6 6V2a1 1 0 0 1 1-1h8a1 1 0 0 1 1 1v4" fill="none" stroke="#2c9bd6" strokeWidth="2" />
            <rect y="5" width="22" height="18.500" rx="3" fill="#e4e2e2" />
            <path d="M6.500 9.500h4v4h-4z" fill="#f25022" /><path d="M11.500 9.500h4v4h-4z" fill="#7fba00" /><path d="M6.500 14.500h4v4h-4z" fill="#00a4ef" /><path d="M11.500 14.500h4v4h-4z" fill="#ffb900" />
          </svg>
        </TaskApp>
        <TaskApp>
          <span className="flex size-5 items-center justify-center rounded-full bg-[#101010]"><FaSpotify className="size-[23px] shrink-0 text-[#1db954]" /></span>
        </TaskApp>
        <TaskApp mark="active">
          <svg viewBox="0 0 24 24" className="size-6">
            <defs><linearGradient id="edge" x1="0" y1=".3" x2="1" y2=".5"><stop offset="0" stopColor="#1c86d8" /><stop offset="1" stopColor="#5ccf6d" /></linearGradient></defs>
            <path d="M0 11C1 4 6 0 12 0c7 0 12 5 12 10 0 4-3 6-6 6s-4-1-3.500-2.500C16 9 12 6 8 7 4 7.500 1 9 0 11z" fill="url(#edge)" />
            <path d="M0 12c1-4 5-6 8-5 3 0 5 2 5 4-3 0-4 3-2 6 2 2 6 3 11 1-3 5-8 6-12 6C4 23 0 18 0 12z" fill="#1464b4" />
            <g transform="translate(0 13) scale(.45)"><circle cx="12" cy="12" r="11" fill="#171019" /><path d="M5 10l13-2 1 4-3 4-4 2-5-4z" fill="#b04038" /><path d="M3 7c5-5 13-5 18-1l-1 4H4z" fill="#08060a" /></g>
          </svg>
        </TaskApp>
        <TaskApp mark="dot">
          <svg viewBox="0 0 24 24" className="size-6">
            <path d="M17.500 0L24 3v18l-6.500 3L6.500 13.500 2 17l-2-1.500L4 12 0 8.500 2 7l4.500 3.500zM18 6.500L10.500 12l7.500 5.500z" fill="#1f8ad2" fillRule="evenodd" />
            <path d="M17.500 0L24 3v18l-6.500 3 .5-6.500v-11z" fill="#35a5ee" />
          </svg>
        </TaskApp>
        <TaskApp mark="dot"><Xampp className="size-6" /></TaskApp>
        <TaskApp mark="dot">
          <svg viewBox="0 0 24 19" className="h-[19px] w-6">
            <rect width="24" height="19" rx="1.500" fill="#3a3c3f" /><path d="M0 1.500A1.500 1.500 0 0 1 1.500 0H16v3.500H0z" fill="#b9babb" /><path d="M16 0h6.500A1.500 1.500 0 0 1 24 1.500v2h-8z" fill="#77797b" />
            <path d="M3 7l3.500 3.500L3 14M11 14.500h7" stroke="#e6e6e6" strokeWidth="1.700" fill="none" />
          </svg>
        </TaskApp>
      </div>
      <div className="ml-auto flex items-center">
        <svg viewBox="0 0 11 7" className="h-[7px] w-[11px]" fill="none" stroke="#e6e6e6" strokeWidth="1.500"><path d="M.7 6L5.500 1.200 10.300 6" /></svg>
        <svg viewBox="0 0 16 16" className="ml-[19px] size-4" stroke="#d8d8d8" strokeWidth="1.400"><circle cx="8" cy="8" r="3.600" fill="#f1f1f1" stroke="none" /><circle cx="8" cy="8" r="4.400" fill="none" strokeWidth=".6" /><path d="M8 0v1.700M8 14.300V16M0 8h1.700M14.300 8H16M2.300 2.300l1.200 1.200M12.500 12.500l1.200 1.200M2.300 13.700l1.200-1.200M12.500 3.500l1.200-1.200" /></svg>
        <svg viewBox="0 0 16 13" className="ml-[16px] h-[13px] w-4" fill="none" stroke="#e2e2e2" strokeWidth="1.100"><rect x=".6" y=".6" width="14.800" height="11.800" rx="2" /><path d="M.6 7.500h14.800M8 7.500v5" /></svg>
        <T w={24} className="ml-[19px] text-[12px]">ENG</T>
        <svg viewBox="0 0 17 16" className="ml-[18px] h-4 w-[17px]" fill="none" stroke="#e2e2e2" strokeWidth="1.100"><path d="M10 1H2a1.400 1.400 0 0 0-1.400 1.400v8.200A1.400 1.400 0 0 0 2 12h10.500M7 12v3M3.500 15.400h8M12 .8h4v4.500h-4zM14 5.300V15" /></svg>
        <svg viewBox="0 0 17 14" className="ml-[7px] h-3.5 w-[17px]" fill="none" stroke="#e2e2e2" strokeWidth="1.100" strokeLinejoin="round"><path d="M.6 5v4h2.600L7 12.500v-11L3.200 5zM9 4.500a3.500 3.500 0 0 1 0 5M11.300 2.700a6 6 0 0 1 0 8.600M13.600.8a9 9 0 0 1 0 12.400" /></svg>
        <div className="-mt-[1px] ml-[15px] flex w-[55px] flex-col items-end text-[12px] leading-4">
          <T w={43}>6:11 PM</T>
          <T w={55}>1/26/2025</T>
        </div>
        <svg viewBox="0 0 15 16" className="mr-[20px] ml-[9px] h-4 w-[15px]">
          <path d="M2 6a5 5 0 0 1 7-4.500L8 6h4v3l1.500 3H.5L2 9zM5 13h4.500a2.300 2.300 0 0 1-4.500 0z" fill="#ededed" />
          <path d="M5 5h3L5 9h3" stroke="#222" fill="none" /><path d="M10 1.500h4l-3.500 4h4" stroke="#ededed" strokeWidth="1.200" fill="none" />
        </svg>
      </div>
    </div>
  );
}

export default function App() {
  return (
    <div className="relative h-[1080px] w-[1920px] overflow-hidden bg-[#55565b] font-['Open_Sans','Noto_Sans',sans-serif] text-[12px] text-[#f4f4f4]">
      <TabBar />
      <Toolbar />
      <div className="h-[34px]"><Bookmarks /></div>
      <Page />
      <div className="h-1" />
      <Taskbar />
      <Overlay />
    </div>
  );
}
